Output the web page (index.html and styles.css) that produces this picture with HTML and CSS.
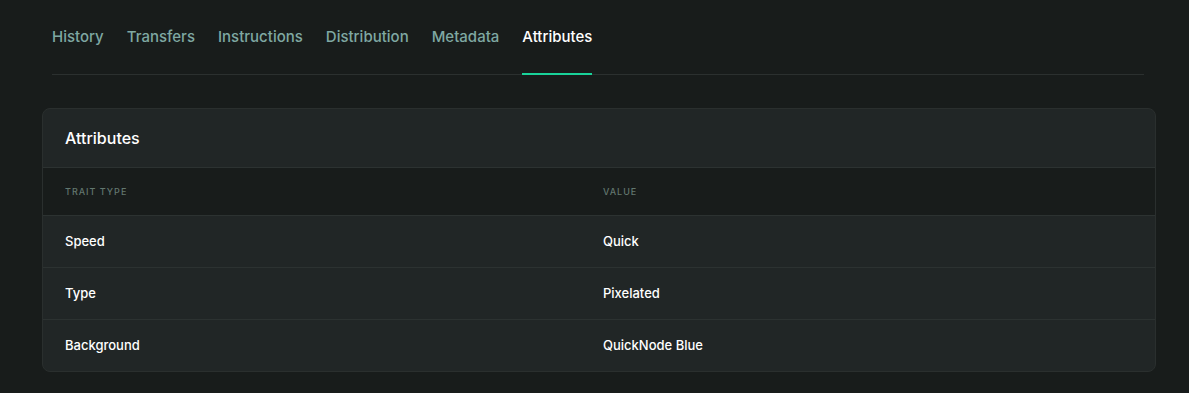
FILE: index.html
```html
<!DOCTYPE html>
<html lang="en">
<head>
  <meta charset="UTF-8">
  <meta name="viewport" content="width=device-width, initial-scale=1.0">
  <title>Token Attributes</title>
  <link rel="stylesheet" href="styles.css">
</head>
<body>
  <main class="page">
    <nav class="tabs">
      <a class="tab" href="#">History</a>
      <a class="tab" href="#">Transfers</a>
      <a class="tab" href="#">Instructions</a>
      <a class="tab" href="#">Distribution</a>
      <a class="tab" href="#">Metadata</a>
      <a class="tab active" href="#">Attributes</a>
    </nav>

    <section class="card">
      <h2 class="card-title">Attributes</h2>
      <table class="attr-table">
        <thead>
          <tr>
            <th>Trait Type</th>
            <th>Value</th>
          </tr>
        </thead>
        <tbody>
          <tr>
            <td>Speed</td>
            <td>Quick</td>
          </tr>
          <tr>
            <td>Type</td>
            <td>Pixelated</td>
          </tr>
          <tr>
            <td>Background</td>
            <td>QuickNode Blue</td>
          </tr>
        </tbody>
      </table>
    </section>
  </main>
</body>
</html>
```

FILE: styles.css
```css
body {
  margin: 0;
  background-color: #181c1b;
  font-family: Inter, "Noto Sans", sans-serif;
  color: #fff;
}

.page {
  padding: 15px 33px 20px 42px;
}

.tabs {
  display: flex;
  gap: 23px;
  margin: 0 12px 0 10px;
  border-bottom: 1px solid #2b302f;
}

.tab {
  padding: 12px 0 27px;
  font-size: 15px;
  font-weight: 500;
  color: #7fa8a2;
  text-decoration: none;
  border-bottom: 2px solid transparent;
  margin-bottom: -1px;
}

.tab.active {
  color: #fff;
  border-bottom-color: #19d39a;
}

.card {
  margin-top: 33px;
  background-color: #212626;
  border: 1px solid #2a2f2e;
  border-radius: 8px;
  overflow: hidden;
}

.card-title {
  margin: 0;
  padding: 18px 22px 18px;
  font-size: 16px;
  font-weight: 500;
  line-height: 22px;
  border-bottom: 1px solid #2c3231;
}

.attr-table {
  width: 100%;
  border-collapse: collapse;
}

.attr-table th {
  background-color: #181c1b;
  text-align: left;
  padding: 18px 22px 17px;
  font-size: 9px;
  font-weight: 500;
  letter-spacing: 1px;
  text-transform: uppercase;
  color: #62776f;
  line-height: 12px;
  width: 50%;
}

.attr-table td {
  padding: 17px 22px 17px;
  font-size: 13px;
  font-weight: 500;
  line-height: 17px;
  border-top: 1px solid #2c3231;
}

.attr-table td + td,
.attr-table th + th {
  padding-left: 4px;
}
```
